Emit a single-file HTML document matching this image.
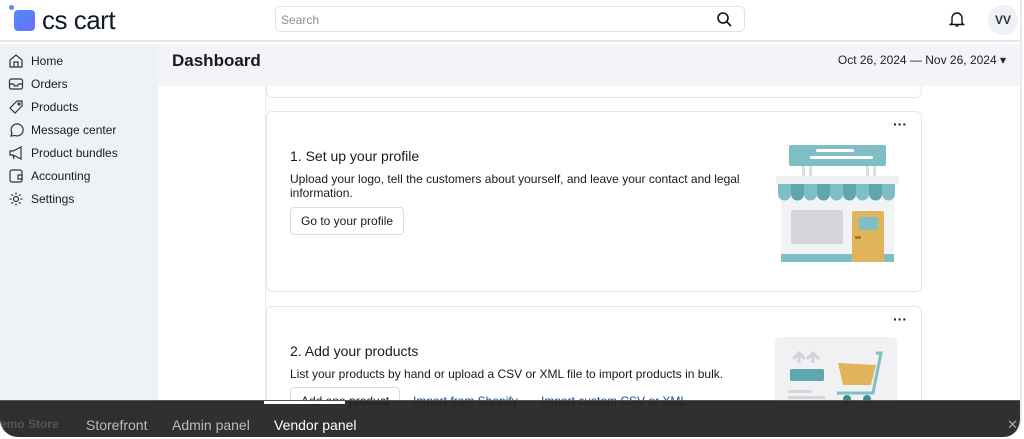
<!DOCTYPE html>
<html><head><meta charset="utf-8"><style>
*{box-sizing:border-box;margin:0;padding:0}
body{width:1024px;height:439px;overflow:hidden;background:#fff;font-family:"Liberation Sans",sans-serif;color:#1a1a1a;position:relative}
.frame{position:absolute;left:0;top:0;width:1022px;height:437px;border-radius:0 0 18px 18px;overflow:hidden;border-right:2px solid #e6e9ee}
.top{position:absolute;left:0;top:0;width:1022px;height:42px;background:#fff;border-bottom:2px solid #e3e7ed}
.logo{position:absolute;left:14px;top:10px;width:21px;height:21px;border-radius:4px;background:linear-gradient(135deg,#4f8dfc,#6a6ff5)}
.dot{position:absolute;left:9px;top:5px;width:5px;height:5px;border-radius:50%;background:#5a8cf8}
.brand{position:absolute;left:42px;top:5px;font-size:26px;letter-spacing:-0.5px;color:#111827}
.search{position:absolute;left:275px;top:6px;width:470px;height:26px;border:1px solid #dde1e7;border-radius:5px;font-size:12px;color:#8a8f98;padding:6px 5px}
.side{position:absolute;left:0;top:44px;width:158px;height:400px;background:#eef1f5}
.nav{position:absolute;left:31px;font-size:12px;color:#1a1a1a}
.ic{position:absolute;left:8px;width:16px;height:16px}
.hdr{position:absolute;left:158px;top:44px;width:864px;height:42px;background:#f2f4f7}
.card{position:absolute;left:266px;width:656px;border:1px solid #e3e7ed;border-radius:6px;background:#fff}
.btn{position:absolute;border:1px solid #d7dce3;border-radius:4px;font-size:12px;padding:6px 10px;background:#fff}
.bar{position:absolute;left:0;top:400px;width:1022px;height:37px;background:rgba(30,30,30,.92);border-top:1px solid #555}
</style></head><body>
<div class="frame">
<div class="top">
<div class="dot"></div><div class="logo"></div>
<div class="brand">cs cart</div>
<div class="search">Search
<svg style="position:absolute;right:12px;top:4px" width="16" height="16" viewBox="0 0 16 16" fill="none" stroke="#111" stroke-width="1.6"><circle cx="7" cy="7" r="5"/><path d="M11 11l4 4"/></svg></div>
<svg style="position:absolute;left:949px;top:10px" width="16" height="18" viewBox="0 0 16 18" fill="none" stroke="#111" stroke-width="1.4"><path d="M3 13V8a5 5 0 0110 0v5l1.5 1.5h-13z"/><path d="M6.5 16h3"/></svg>
<div style="position:absolute;left:988px;top:5px;width:30px;height:30px;border-radius:50%;background:#eef1f5;font-size:12px;font-weight:bold;color:#333;text-align:center;line-height:30px">VV</div>
</div>
<div class="side">
<svg class="ic" style="top:9px" viewBox="0 0 16 16" fill="none" stroke="#333" stroke-width="1.2"><path d="M2 7l6-5 6 5v7H2z"/><path d="M6 14V9h4v5"/></svg><div class="nav" style="top:10px">Home</div>
<svg class="ic" style="top:32px" viewBox="0 0 16 16" fill="none" stroke="#333" stroke-width="1.2"><rect x="1.5" y="3" width="13" height="10" rx="2"/><path d="M1.5 8h4l1 2h3l1-2h4"/></svg><div class="nav" style="top:33px">Orders</div>
<svg class="ic" style="top:55px" viewBox="0 0 16 16" fill="none" stroke="#333" stroke-width="1.2"><path d="M9 2h5v5l-7 7-5-5z"/><circle cx="11" cy="5" r="1"/></svg><div class="nav" style="top:56px">Products</div>
<svg class="ic" style="top:78px" viewBox="0 0 16 16" fill="none" stroke="#333" stroke-width="1.2"><path d="M3 14l1-3a6 6 0 113 2.5z"/></svg><div class="nav" style="top:79px">Message center</div>
<svg class="ic" style="top:101px" viewBox="0 0 16 16" fill="none" stroke="#333" stroke-width="1.2"><path d="M2 6h3l8-4v12l-8-4H2z"/><path d="M5 10l1 4"/></svg><div class="nav" style="top:102px">Product bundles</div>
<svg class="ic" style="top:124px" viewBox="0 0 16 16" fill="none" stroke="#333" stroke-width="1.2"><rect x="2" y="2" width="12" height="12" rx="2"/><path d="M10 7h4v4h-4z"/></svg><div class="nav" style="top:125px">Accounting</div>
<svg class="ic" style="top:147px" viewBox="0 0 16 16" fill="none" stroke="#333" stroke-width="1.2"><circle cx="8" cy="8" r="2.5"/><path d="M8 1.5v2M8 12.5v2M1.5 8h2M12.5 8h2M3.4 3.4l1.4 1.4M11.2 11.2l1.4 1.4M3.4 12.6l1.4-1.4M11.2 4.8l1.4-1.4"/></svg><div class="nav" style="top:148px">Settings</div>
</div>
<div class="hdr">
<div style="position:absolute;left:14px;top:7px;font-size:17px;font-weight:bold">Dashboard</div>
<div style="position:absolute;right:16px;top:9px;font-size:12px;color:#222">Oct 26, 2024 — Nov 26, 2024 ▾</div>
</div>
<div style="position:absolute;left:265px;top:86px;width:1px;height:320px;background:#e8ebef"></div>
<div class="card" style="top:86px;height:12px;border-top:none;border-radius:0 0 6px 6px"></div>
<div class="card" style="top:111px;height:181px">
<div style="position:absolute;right:14px;top:4px;font-size:14px;font-weight:bold">···</div>
<div style="position:absolute;left:23px;top:36px;font-size:14px;font-weight:500">1. Set up your profile</div>
<div style="position:absolute;left:23px;top:60px;width:470px;font-size:12px;line-height:14px">Upload your logo, tell the customers about yourself, and leave your contact and legal information.</div>
<div class="btn" style="left:23px;top:95px">Go to your profile</div>
<svg style="position:absolute;left:508px;top:30px" width="126" height="122" viewBox="0 0 126 122">
<rect x="14" y="3" width="97" height="21" rx="2" fill="#80bec6"/><rect x="41" y="7" width="38" height="3" rx="1.5" fill="#fff"/><rect x="35" y="14" width="63" height="3" rx="1.5" fill="#fff"/>
<rect x="27" y="24" width="3" height="10" fill="#ddd"/><rect x="34" y="24" width="3" height="10" fill="#ddd"/><rect x="91" y="24" width="3" height="10" fill="#ddd"/><rect x="98" y="24" width="3" height="10" fill="#ddd"/>
<rect x="1" y="34" width="123" height="8" rx="2" fill="#eef0f2"/>
<rect x="6" y="42" width="113" height="76" fill="#f2f3f4"/>
<path d="M3 42h13v10a6.5 6.5 0 01-13 0z" fill="#80bec6"/><path d="M16 42h13v10a6.5 6.5 0 01-13 0z" fill="#5ea7ae"/><path d="M29 42h13v10a6.5 6.5 0 01-13 0z" fill="#80bec6"/><path d="M42 42h13v10a6.5 6.5 0 01-13 0z" fill="#5ea7ae"/><path d="M55 42h13v10a6.5 6.5 0 01-13 0z" fill="#80bec6"/><path d="M68 42h13v10a6.5 6.5 0 01-13 0z" fill="#5ea7ae"/><path d="M81 42h13v10a6.5 6.5 0 01-13 0z" fill="#80bec6"/><path d="M94 42h13v10a6.5 6.5 0 01-13 0z" fill="#5ea7ae"/><path d="M107 42h13v10a6.5 6.5 0 01-13 0z" fill="#80bec6"/>
<rect x="16" y="68" width="52" height="34" rx="2" fill="#d4d6d9"/>
<rect x="77" y="69" width="32" height="51" rx="2" fill="#dfb45a"/><rect x="84" y="75" width="19" height="13" fill="#80bec6"/><rect x="80" y="94" width="6" height="3" fill="#a87a28"/>
<rect x="6" y="112" width="71" height="8" fill="#80bec6"/><rect x="109" y="112" width="10" height="8" fill="#80bec6"/>
</svg>
</div>
<div class="card" style="top:306px;height:140px">
<div style="position:absolute;right:14px;top:4px;font-size:14px;font-weight:bold">···</div>
<div style="position:absolute;left:23px;top:36px;font-size:14px;font-weight:500">2. Add your products</div>
<div style="position:absolute;left:23px;top:60px;font-size:12px">List your products by hand or upload a CSV or XML file to import products in bulk.</div>
<div class="btn" style="left:23px;top:80px">Add one product</div>
<div style="position:absolute;left:146px;top:87px;font-size:12px;color:#1e4b8a">Import from Shopify</div>
<div style="position:absolute;left:274px;top:87px;font-size:12px;color:#1e4b8a">Import custom CSV or XML</div>
<svg style="position:absolute;left:508px;top:30px" width="124" height="100" viewBox="0 0 124 100">
<rect x="0" y="0" width="122" height="100" rx="5" fill="#f0f1f3"/>
<path d="M18 22l6-6 6 6M24 16v10M32 22l6-6 6 6M38 16v10" stroke="#d0d3d7" stroke-width="3" fill="none"/>
<rect x="15" y="32" width="34" height="12" rx="2" fill="#5ea7ae"/>
<rect x="13" y="53" width="24" height="3" fill="#d4d6d9"/><rect x="13" y="59" width="37" height="3" fill="#d4d6d9"/>
<path d="M63 26l38 2-5 20H68z" fill="#dfb45a"/><path d="M101 16h5l-8 40H62" stroke="#80bec6" stroke-width="3" fill="none"/>
<circle cx="72" cy="62" r="4" fill="#3f8d94"/><circle cx="92" cy="62" r="4" fill="#3f8d94"/>
</svg>
</div>
<div class="bar">
<div style="position:absolute;left:264px;top:0;width:81px;height:3px;background:#fff"></div>
<div style="position:absolute;left:0;top:16px;font-size:12px;font-weight:bold;color:#555">emo Store</div>
<div style="position:absolute;left:86px;top:16px;font-size:14px;color:#bbb">Storefront</div>
<div style="position:absolute;left:172px;top:16px;font-size:14px;color:#bbb">Admin panel</div>
<div style="position:absolute;left:274px;top:16px;font-size:14px;color:#fff">Vendor panel</div>
<div style="position:absolute;right:4px;top:16px;font-size:13px;color:#aaa">✕</div>
</div>
</div>
</body></html>
